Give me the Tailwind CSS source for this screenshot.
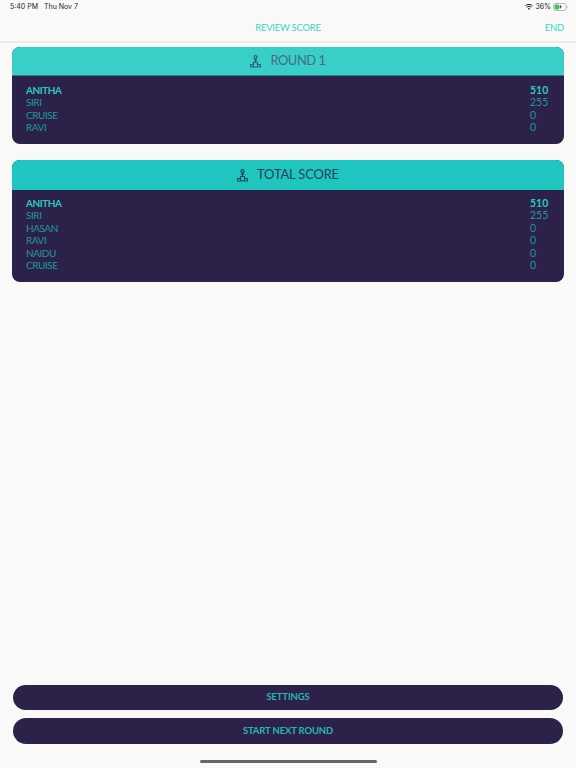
<!DOCTYPE html>
<html lang="en">

<head>
    <meta charset="UTF-8">
    <meta name="viewport" content="width=device-width, initial-scale=1.0">
    <script src="https://cdn.jsdelivr.net/npm/@tailwindcss/browser@4"></script>
    <title>Review Score</title>
</head>

<body class="bg-[#f9f9f7] font-['Lato',sans-serif]">
    <div class="flex flex-col w-[576px] h-[768px] overflow-hidden">
        <!-- Status bar -->
        <div class="flex justify-between items-center h-[14px] pl-[10px] pr-[8px] text-[7px] text-[#222] font-['Inter',sans-serif]">
            <div class="flex gap-[6px]"><span>5:40 PM</span><span>Thu Nov 7</span></div>
            <div class="flex items-center gap-[2px]">
                <svg width="8" height="6" viewBox="0 0 8 6" fill="none" stroke="#222"><path d="M0.400 1.900 A5 5 0 0 1 7.600 1.900"/><path d="M1.800 3.200 A3.200 3.200 0 0 1 6.200 3.200"/><path d="M4 5.900 L2.900 4.500 A1.500 1.500 0 0 1 5.100 4.500 Z" fill="#222" stroke="none"/></svg>
                <span>36%</span>
                <svg width="15" height="8" viewBox="0 0 15 8"><rect x="0.500" y="0.500" width="12.500" height="7" rx="2" fill="none" stroke="#bbb"/><rect x="1.500" y="1.500" width="4.500" height="5" rx="1" fill="#34c759"/><path d="M14 2.700v2.600" stroke="#bbb"/><path d="M8 1.500 L6 4.200 H7.500 L6.500 6.500 L9 3.600 H7.500 Z" fill="#222"/></svg>
            </div>
        </div>

        <!-- Nav -->
        <header class="relative flex justify-center items-center h-[29px] pt-[1px] border-b-2 border-[#ebebe9] text-[9.5px] tracking-[-0.25px] text-[#3dd3cb]">
            <span>REVIEW SCORE</span>
            <span class="absolute right-[12px]">END</span>
        </header>

        <div class="flex flex-col gap-[16px] px-[12px] pt-[4px]">
            <!-- Round 1 -->
            <section class="rounded-[8px] overflow-hidden bg-[#2c2249]">
                <div class="flex justify-center items-center gap-[9px] h-[29px] bg-[#38cfc8] text-[#4a6b80] text-[13px] tracking-[-0.5px] border-b border-[#2a7f8a]">
                    <svg width="11" height="13" viewBox="0 0 11 13" fill="none" stroke="#2f5f75" stroke-width="1.200"><circle cx="5.500" cy="2.200" r="1.500"/><path d="M5.500 3.700v3.300M3.800 5.300h3.400"/><path d="M3.500 7.500h4V12h-4zM0.600 9.500h2.900V12H0.600zM7.500 9.500h2.900V12H7.500z"/></svg>
                    <span>ROUND 1</span>
                </div>
                <div class="flex flex-col px-[14px] pt-[8px] pb-[10.4px] text-[10px] leading-[12.4px] tracking-[-0.45px] text-[#2295a0]">
                    <div class="flex items-baseline font-bold text-[#2bc8c0]"><span class="flex-1">ANITHA</span><span class="w-[20px] text-[10.5px] leading-[12.4px] tracking-normal">510</span></div>
                    <div class="flex items-baseline"><span class="flex-1">SIRI</span><span class="w-[20px] text-[10.5px] leading-[12.4px] tracking-normal">255</span></div>
                    <div class="flex items-baseline"><span class="flex-1">CRUISE</span><span class="w-[20px] text-[10.5px] leading-[12.4px] tracking-normal">0</span></div>
                    <div class="flex items-baseline"><span class="flex-1">RAVI</span><span class="w-[20px] text-[10.5px] leading-[12.4px] tracking-normal">0</span></div>
                </div>
            </section>

            <!-- Total score -->
            <section class="rounded-[8px] overflow-hidden bg-[#2c2249]">
                <div class="flex justify-center items-center gap-[9px] h-[30px] bg-[#1fc6bf] text-[#27405f] text-[13px] tracking-[-0.2px]">
                    <svg width="11" height="13" viewBox="0 0 11 13" fill="none" stroke="#1f4a63" stroke-width="1.200"><circle cx="5.500" cy="2.200" r="1.500"/><path d="M5.500 3.700v3.300M3.800 5.300h3.400"/><path d="M3.500 7.500h4V12h-4zM0.600 9.500h2.900V12H0.600zM7.500 9.500h2.900V12H7.500z"/></svg>
                    <span>TOTAL SCORE</span>
                </div>
                <div class="flex flex-col px-[14px] pt-[7px] pb-[10.6px] text-[10px] leading-[12.4px] tracking-[-0.45px] text-[#2295a0]">
                    <div class="flex items-baseline font-bold text-[#2bc8c0]"><span class="flex-1">ANITHA</span><span class="w-[20px] text-[10.5px] leading-[12.4px] tracking-normal">510</span></div>
                    <div class="flex items-baseline"><span class="flex-1">SIRI</span><span class="w-[20px] text-[10.5px] leading-[12.4px] tracking-normal">255</span></div>
                    <div class="flex items-baseline"><span class="flex-1">HASAN</span><span class="w-[20px] text-[10.5px] leading-[12.4px] tracking-normal">0</span></div>
                    <div class="flex items-baseline"><span class="flex-1">RAVI</span><span class="w-[20px] text-[10.5px] leading-[12.4px] tracking-normal">0</span></div>
                    <div class="flex items-baseline"><span class="flex-1">NAIDU</span><span class="w-[20px] text-[10.5px] leading-[12.4px] tracking-normal">0</span></div>
                    <div class="flex items-baseline"><span class="flex-1">CRUISE</span><span class="w-[20px] text-[10.5px] leading-[12.4px] tracking-normal">0</span></div>
                </div>
            </section>
        </div>

        <!-- Buttons -->
        <div class="mt-auto flex flex-col items-center gap-[8px] px-[13px]">
            <button class="w-full h-[25px] rounded-full bg-[#2c2249] text-[#26b5b3] text-[9.5px] tracking-[-0.15px] font-bold">SETTINGS</button>
            <button class="w-full h-[26px] rounded-full bg-[#2c2249] text-[#26b5b3] text-[9.5px] tracking-[-0.15px] font-bold">START NEXT ROUND</button>
            <div class="w-[177px] h-[3px] mt-[8px] mb-[5px] rounded-full bg-[#666]"></div>
        </div>
    </div>
</body>

</html>
